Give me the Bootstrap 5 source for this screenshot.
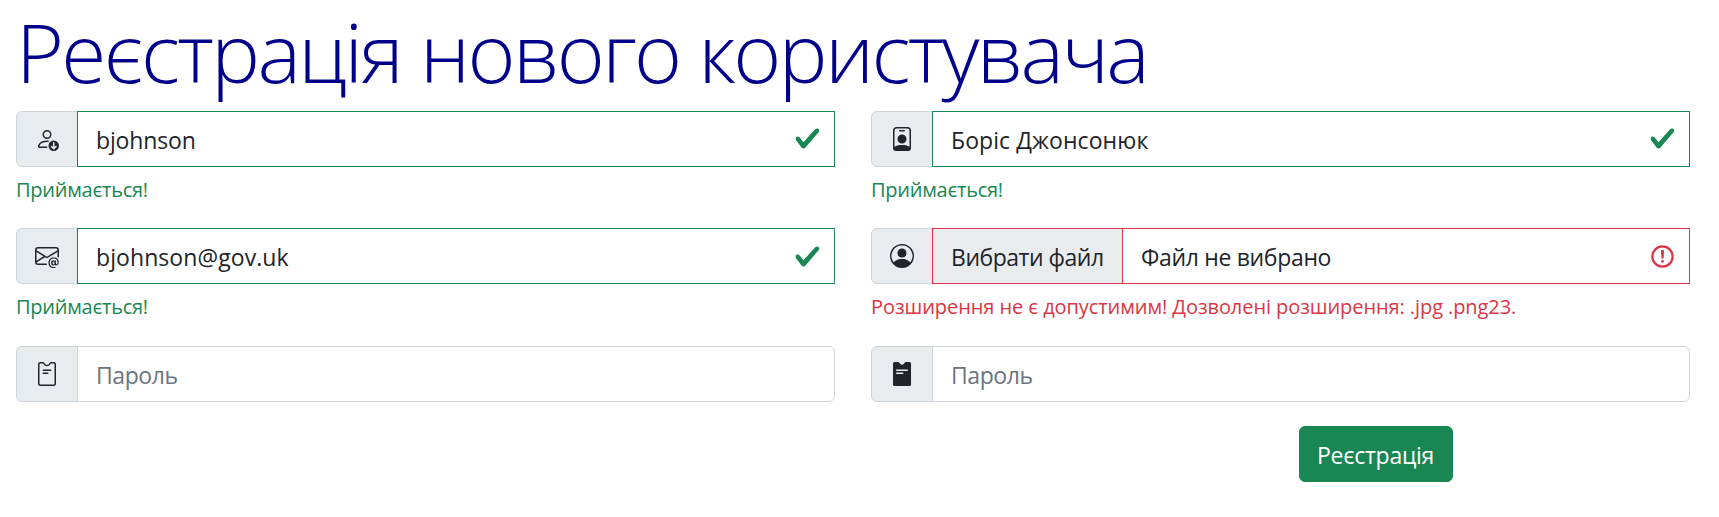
<!DOCTYPE html>
<html lang="uk">
<head>
<meta charset="utf-8">
<meta name="viewport" content="width=device-width, initial-scale=1">
<title>Реєстрація нового користувача</title>
<link href="https://cdn.jsdelivr.net/npm/bootstrap@5.3.0/dist/css/bootstrap.min.css" rel="stylesheet">
<style>
html{font-size:24px;overflow:hidden}
body{font-family:"Open Sans","Noto Sans",sans-serif;color:#212529;line-height:1.5}
.page-wrap{padding:0 29px 0 16px}
.page-title{font-size:82px;font-weight:300;line-height:103px;height:98.9px;margin-bottom:12px;color:#00008b;white-space:nowrap;letter-spacing:-2.62px}
.field{margin-bottom:24px}
.input-group>.form-control{border-radius:0;font-size:23px;height:56px;line-height:36px;padding:10px 18px 8px;letter-spacing:.08px}
.input-group>.form-control.rounded-end-field{border-radius:0 6px 6px 0;letter-spacing:-.43px}
.input-group>.form-control.is-latin{letter-spacing:-.15px}
.input-group>.form-control.is-valid,.input-group>.form-control.is-invalid{background-size:27px 27px;background-position:right 13.5px center}
.form-control:not(.is-valid):not(.is-invalid),.input-group-text{border-color:#ced4da}
.form-control::placeholder{color:#6c757d}
.input-group-text{background:#e9ecef;border-radius:6px 0 0 6px}
.input-group-text svg{width:24px;height:24px;fill:currentColor;display:block}
.valid-feedback,.invalid-feedback{display:block;font-size:20px;line-height:31.5px;margin-top:6px;padding-top:1px;height:31.5px;white-space:nowrap}
.valid-feedback{color:#198754;letter-spacing:-.27px}
.invalid-feedback{color:#dc3545;letter-spacing:-.08px}
.form-control.is-valid{border-color:#198754}
.form-control.is-invalid{border-color:#dc3545}
.input-group>.form-control.file-box{padding:0;display:flex}
.file-btn{background:#e9ecef;border-right:1px solid #dc3545;padding:10px 18px 8px;width:190px;white-space:nowrap;letter-spacing:-.48px}
.file-name{padding:10px 18px 8px;letter-spacing:-.33px}
.btn-register{font-size:23px;line-height:36px;border-radius:6px;height:56px;width:154px;padding:10px 0 8px;white-space:nowrap;letter-spacing:-.25px}
</style>
</head>
<body>
<div class="container-fluid page-wrap">
<h1 class="page-title">Реєстрація нового користувача</h1>
<form class="row" onsubmit="return false">
<div class="col-6 field"><div class="input-group">
<span class="input-group-text"><svg viewBox="0 0 16 16"><path d="M12.5 9a3.5 3.5 0 1 1 0 7 3.5 3.5 0 0 1 0-7Zm.354 5.854 1.5-1.5a.5.5 0 0 0-.708-.708l-.646.647V10.5a.5.5 0 0 0-1 0v2.793l-.646-.647a.5.5 0 0 0-.708.708l1.5 1.5a.5.5 0 0 0 .708 0ZM11 5a3 3 0 1 1-6 0 3 3 0 0 1 6 0ZM8 7a2 2 0 1 0 0-4 2 2 0 0 0 0 4Z"/><path d="M8.256 14a4.474 4.474 0 0 1-.229-1.004H3c.001-.246.154-.986.832-1.664C4.484 10.68 5.711 10 8 10c.26 0 .507.009.74.025.226-.341.496-.65.804-.918C9.077 9.038 8.564 9 8 9c-5 0-6 3-6 4s1 1 1 1h5.256Z"/></svg></span>
<input class="form-control is-valid is-latin" value="bjohnson">
<div class="valid-feedback">Приймається!</div></div></div>
<div class="col-6 field"><div class="input-group">
<span class="input-group-text"><svg viewBox="0 0 16 16"><path d="M6.5 2a.5.5 0 0 0 0 1h3a.5.5 0 0 0 0-1h-3zM11 8a3 3 0 1 1-6 0 3 3 0 0 1 6 0z"/><path d="M4.5 0A2.5 2.5 0 0 0 2 2.5V14a2 2 0 0 0 2 2h8a2 2 0 0 0 2-2V2.5A2.5 2.5 0 0 0 11.5 0h-7zM3 2.5A1.5 1.5 0 0 1 4.5 1h7A1.5 1.5 0 0 1 13 2.5v10.795a4.2 4.2 0 0 0-.776-.492C11.392 12.387 10.063 12 8 12s-3.392.387-4.224.803a4.2 4.2 0 0 0-.776.492V2.5z"/></svg></span>
<input class="form-control is-valid" value="Боріс Джонсонюк">
<div class="valid-feedback">Приймається!</div></div></div>
<div class="col-6 field"><div class="input-group">
<span class="input-group-text"><svg viewBox="0 0 16 16"><path d="M2 2a2 2 0 0 0-2 2v8.01A2 2 0 0 0 2 14h5.5a.5.5 0 0 0 0-1H2a1 1 0 0 1-.966-.741l5.64-3.471L8 9.583l7-4.2V8.5a.5.5 0 0 0 1 0V4a2 2 0 0 0-2-2H2Zm3.708 6.208L1 11.105V5.383l4.708 2.825ZM1 4.217V4a1 1 0 0 1 1-1h12a1 1 0 0 1 1 1v.217l-7 4.2-7-4.2Z"/><path d="M14.247 14.269c1.01 0 1.587-.857 1.587-2.025v-.21C15.834 10.43 14.64 9 12.52 9h-.035C10.42 9 9 10.36 9 12.432v.214C9 14.82 10.438 16 12.358 16h.044c.594 0 1.018-.074 1.237-.175v-.73c-.245.11-.673.18-1.18.18h-.044c-1.334 0-2.571-.788-2.571-2.655v-.157c0-1.657 1.058-2.724 2.64-2.724h.04c1.535 0 2.484 1.05 2.484 2.326v.118c0 .975-.324 1.39-.639 1.39-.232 0-.41-.148-.41-.42v-2.19h-.906v.569h-.03c-.084-.298-.368-.63-.954-.63-.778 0-1.259.555-1.259 1.4v.528c0 .892.49 1.434 1.26 1.434.471 0 .896-.227 1.014-.643h.043c.118.42.617.648 1.12.648Zm-2.453-1.588v-.227c0-.546.227-.791.573-.791.297 0 .572.192.572.708v.367c0 .573-.253.744-.564.744-.354 0-.581-.215-.581-.8Z"/></svg></span>
<input class="form-control is-valid" value="bjohnson@gov.uk">
<div class="valid-feedback">Приймається!</div></div></div>
<div class="col-6 field"><div class="input-group">
<span class="input-group-text"><svg viewBox="0 0 16 16"><path d="M11 6a3 3 0 1 1-6 0 3 3 0 0 1 6 0z"/><path fill-rule="evenodd" d="M0 8a8 8 0 1 1 16 0A8 8 0 0 1 0 8zm8-7a7 7 0 0 0-5.468 11.37C3.242 11.226 4.805 10 8 10s4.757 1.225 5.468 2.37A7 7 0 0 0 8 1z"/></svg></span>
<label class="form-control is-invalid file-box"><span class="file-btn">Вибрати файл</span><span class="file-name">Файл не вибрано</span></label>
<div class="invalid-feedback">Розширення не є допустимим! Дозволені розширення: .jpg .png23.</div></div></div>
<div class="col-6 field"><div class="input-group">
<span class="input-group-text"><svg viewBox="0 0 16 16"><path d="M5 5.500a.5.5 0 0 1 .5-.5h5a.5.5 0 0 1 0 1h-5a.5.5 0 0 1-.5-.5zm0 2a.5.5 0 0 1 .5-.5h3a.5.5 0 0 1 0 1h-3a.5.5 0 0 1-.5-.5z"/><path d="M3.500.5h1.600a.9.9 0 0 1 .8.5 2.300 2.300 0 0 0 4.200 0 .9.9 0 0 1 .8-.5h1.600a1 1 0 0 1 1 1v13a1 1 0 0 1-1 1h-9a1 1 0 0 1-1-1v-13a1 1 0 0 1 1-1z" fill="none" stroke="currentColor"/></svg></span>
<input class="form-control rounded-end-field" placeholder="Пароль"></div></div>
<div class="col-6 field"><div class="input-group">
<span class="input-group-text"><svg viewBox="0 0 16 16"><path fill-rule="evenodd" d="M3 0h2.200a1.200 1.200 0 0 1 1.200.8 1.800 1.800 0 0 0 3.200 0 1.200 1.200 0 0 1 1.200-.8H13a1 1 0 0 1 1 1v14a1 1 0 0 1-1 1H3a1 1 0 0 1-1-1V1a1 1 0 0 1 1-1zM4.500 5a.5.5 0 0 0 0 1h7a.5.5 0 0 0 0-1zm0 2a.5.5 0 0 0 0 1h4a.5.5 0 0 0 0-1z"/></svg></span>
<input class="form-control rounded-end-field" placeholder="Пароль"></div></div>
<div class="col-3 offset-9"><button class="btn btn-success btn-register" type="submit">Реєстрація</button></div>
</form>
</div>
<script src="https://cdn.jsdelivr.net/npm/bootstrap@5.3.0/dist/js/bootstrap.bundle.min.js"></script>
</body>
</html>
